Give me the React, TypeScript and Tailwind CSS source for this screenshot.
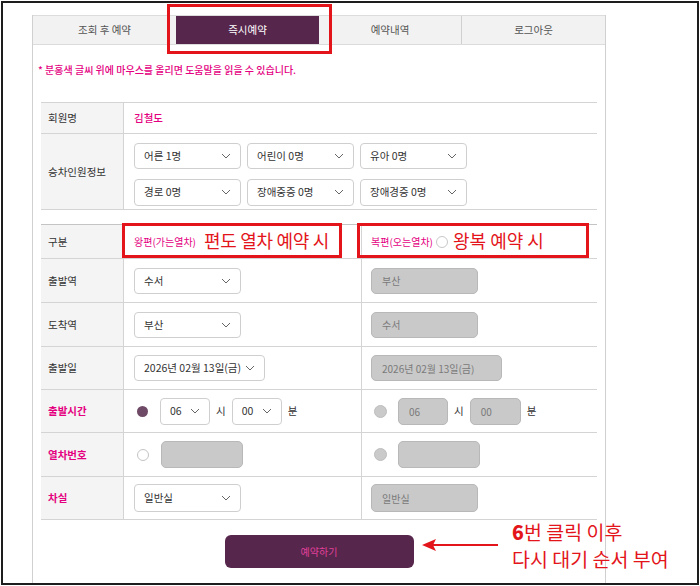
import React from "react";

const FONT = "font-['Noto_Sans_CJK_KR','Noto_Sans',sans-serif]";

function Chevron({ className = "" }: { className?: string }) {
  return (
    <svg width="10" height="6" viewBox="0 0 10 6" className={className} fill="none">
      <path d="M1 1l4 4 4-4" stroke="#666" strokeWidth="1" />
    </svg>
  );
}

function Select({ label, w = "w-[107px]", h = "h-[26px]" }: { label: string; w?: string; h?: string }) {
  return (
    <div className={`${w} ${h} flex items-center justify-between whitespace-nowrap rounded-[4px] border border-[#cfcfcf] bg-white pl-[9px] pr-[9px] text-[10.5px] text-[#333]`}>
      <span>{label}</span>
      <Chevron />
    </div>
  );
}

function Disabled({ label, w = "w-[107px]", h = "h-[26px]" }: { label?: string; w?: string; h?: string }) {
  return (
    <div className={`${w} ${h} flex items-center whitespace-nowrap rounded-[5px] border border-[#b8b8b8] bg-[#c9c9c9] pl-[10px] text-[10px] text-[#7a7a7a]`}>
      {label}
    </div>
  );
}

function Row({
  label,
  pink,
  left,
  right,
  h = "h-[43px]",
}: {
  label: string;
  pink?: boolean;
  left: React.ReactNode;
  right: React.ReactNode;
  h?: string;
}) {
  return (
    <div className={`flex ${h} border-b border-[#d4d4d4]`}>
      <div
        className={`w-[83px] shrink-0 flex items-center border-r border-[#d4d4d4] bg-[#f4f4f4] pl-[7px] text-[10.5px] ${
          pink ? "text-[#e4007f] font-bold" : "text-[#333]"
        }`}
      >
        {label}
      </div>
      <div className="w-[238px] shrink-0 flex items-center border-r border-[#d4d4d4] pl-[10px]">{left}</div>
      <div className="flex-1 flex items-center pl-[9px]">{right}</div>
    </div>
  );
}

export default function App() {
  const tabs = ["조회 후 예약", "즉시예약", "예약내역", "로그아웃"];

  return (
    <div className={`relative w-[700px] h-[586px] bg-white p-px overflow-hidden ${FONT}`}>
      <div className="h-[584px] border-2 border-[#1d1d1d] overflow-hidden">
        {/* Main panel */}
        <div className="ml-[29px] mt-[12px] w-[574px] h-[600px] border-x border-[#d0d0d0]">
          {/* Tabs */}
          <div className="grid grid-cols-4 h-[30px] border-y border-[#dcdcdc] bg-[#f2f2f2]">
            {tabs.map((t, i) => (
              <div
                key={t}
                className={`flex items-center justify-center text-[10.5px] ${
                  i === 1
                    ? "bg-[#57264c] text-white"
                    : i === 2
                    ? "text-[#555] border-r border-[#d0d0d0]"
                    : "text-[#555]"
                }`}
              >
                {t}
              </div>
            ))}
          </div>

          <p className="mt-[17px] ml-[5px] text-[10px] leading-[16px] font-medium text-[#e4007f]">
            * 분홍색 글씨 위에 마우스를 올리면 도움말을 읽을 수 있습니다.
          </p>

          {/* Member table */}
          <div className="ml-[8px] mt-[24px] w-[556px] border-t border-[#d4d4d4]">
            <div className="flex h-[31px] border-b border-[#d4d4d4]">
              <div className="w-[83px] flex items-center border-r border-[#d4d4d4] bg-[#f4f4f4] pl-[7px] text-[10.5px] text-[#333]">
                회원명
              </div>
              <div className="flex items-center pl-[10px] text-[10.5px] font-medium text-[#e4007f]">김철도</div>
            </div>
            <div className="flex h-[76px] border-b border-[#d4d4d4]">
              <div className="w-[83px] flex items-center border-r border-[#d4d4d4] bg-[#f4f4f4] pl-[7px] text-[10.5px] text-[#333]">
                승차인원정보
              </div>
              <div className="grid grid-cols-[107px_107px_107px] gap-x-[6px] gap-y-[6px] pl-[10px] pt-[9px]">
                <Select label="어른 1명" />
                <Select label="어린이 0명" />
                <Select label="유아 0명" />
                <Select label="경로 0명" h="h-[27px]" />
                <Select label="장애중증 0명" h="h-[27px]" />
                <Select label="장애경증 0명" h="h-[27px]" />
              </div>
            </div>
          </div>

          {/* Trip table */}
          <div className="ml-[8px] mt-[14px] w-[556px] border-t border-[#c4c4c4]">
            <Row
              label="구분"
              h="h-[34px]"
              left={<span className="text-[10px] text-[#e4007f]">왕편(가는열차)</span>}
              right={
                <span className="flex items-center">
                  <span className="text-[10px] text-[#e4007f]">복편(오는열차)</span>
                  <span className="ml-[3px] h-[12px] w-[12px] rounded-full border border-[#c8c8c8] bg-white" />
                </span>
              }
            />
            <Row label="출발역" h="h-[44px]" left={<Select label="수서" />} right={<Disabled label="부산" />} />
            <Row label="도착역" h="h-[44px]" left={<Select label="부산" />} right={<Disabled label="수서" />} />
            <Row
              label="출발일"
              left={<Select label="2026년 02월 13일(금)" w="w-[131px]" />}
              right={<Disabled label="2026년 02월 13일(금)" w="w-[131px]" />}
            />
            <Row
              label="출발시간"
              pink
              left={
                <div className="flex items-center text-[10.5px] text-[#333]">
                  <span className="ml-[3px] h-[11px] w-[11px] rounded-full bg-[#6e4a66]" />
                  <div className="ml-[12px]">
                    <Select label="06" w="w-[50px]" h="h-[27px]" />
                  </div>
                  <span className="ml-[6px]">시</span>
                  <div className="ml-[6px]">
                    <Select label="00" w="w-[50px]" h="h-[27px]" />
                  </div>
                  <span className="ml-[6px]">분</span>
                </div>
              }
              right={
                <div className="flex items-center text-[10.5px] text-[#333]">
                  <span className="ml-[3px] h-[13px] w-[13px] rounded-full border border-[#bdbdbd] bg-[#cacaca]" />
                  <div className="ml-[11px]">
                    <Disabled label="06" w="w-[50px]" h="h-[27px]" />
                  </div>
                  <span className="ml-[6px]">시</span>
                  <div className="ml-[6px]">
                    <Disabled label="00" w="w-[51px]" h="h-[27px]" />
                  </div>
                  <span className="ml-[6px]">분</span>
                </div>
              }
            />
            <Row
              label="열차번호"
              pink
              h="h-[44px]"
              left={
                <div className="flex items-center">
                  <span className="ml-[3px] h-[12px] w-[12px] rounded-full border border-[#c4c4c4] bg-white" />
                  <div className="ml-[12px]">
                    <Disabled w="w-[82px]" h="h-[27px]" />
                  </div>
                </div>
              }
              right={
                <div className="flex items-center">
                  <span className="ml-[3px] h-[13px] w-[13px] rounded-full border border-[#bdbdbd] bg-[#cacaca]" />
                  <div className="ml-[11px]">
                    <Disabled w="w-[82px]" h="h-[27px]" />
                  </div>
                </div>
              }
            />
            <Row
              label="차실"
              pink
              left={<Select label="일반실" h="h-[28px]" />}
              right={<Disabled label="일반실" h="h-[28px]" />}
            />
          </div>

          <div className="ml-[8px] w-[556px] pt-[15px]">
            <button className="mx-auto flex h-[33px] w-[189px] items-center justify-center rounded-[6px] bg-[#57264c] text-[10px] text-[#e0409a]">
              예약하기
            </button>
          </div>
        </div>
      </div>

      {/* Annotation boxes */}
      <div className="absolute left-[167px] top-[4px] h-[50px] w-[165px] border-[3px] border-[#e3151b]" />
      <div className="absolute left-[122px] top-[223px] h-[35px] w-[220px] border-[3px] border-[#e3151b]" />
      <div className="absolute left-[357px] top-[223px] h-[35px] w-[232px] border-[3px] border-[#e3151b]" />
      <span className="absolute left-[204px] top-[228px] text-[18px] leading-[24px] tracking-[-0.3px] text-[#e3151b]">
        편도 열차 예약 시
      </span>
      <span className="absolute left-[453px] top-[228px] text-[18px] leading-[24px] text-[#e3151b]">왕복 예약 시</span>

      {/* Annotation text + arrow */}
      <div className="absolute left-[512px] top-[518px] text-[19.5px] leading-[27px] text-[#e3151b]">
        <div>
          <span className="font-black">6</span>번 클릭 이후
        </div>
        <div>다시 대기 순서 부여</div>
      </div>
      <svg className="absolute left-[420px] top-[537px]" width="80" height="16" viewBox="0 0 80 16">
        <line x1="10" y1="8" x2="78" y2="8" stroke="#e3151b" strokeWidth="2" />
        <path d="M2 8L16 2L13 8L16 14Z" fill="#e3151b" />
      </svg>
    </div>
  );
}
